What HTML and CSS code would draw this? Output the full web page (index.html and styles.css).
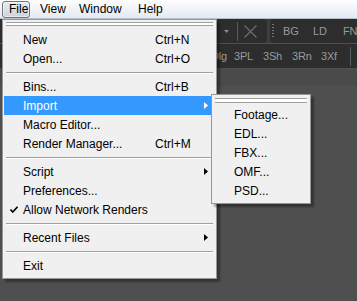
FILE: index.html
```html
<!DOCTYPE html>
<html lang="en">
<head>
    <meta charset="UTF-8">
    <meta name="viewport" content="width=device-width, initial-scale=1.0">
    <title>File menu</title>
    <link rel="stylesheet" href="styles.css">
</head>
<body>

    <div class="app">
        <div class="menubar">
            <span class="mb-item mb-file active">File</span>
            <span class="mb-item mb-view">View</span>
            <span class="mb-item mb-window">Window</span>
            <span class="mb-item mb-help">Help</span>
        </div>

        <div class="tb-row">
            <div class="tb-panel tb-panel-a">
                <svg class="tb-drop" width="5" height="3" viewBox="0 0 5 3"><polygon points="0,0 5,0 2.5,3" fill="#8a8a8a"/></svg>
                <span class="tb-sep"></span>
                <svg class="tb-x" width="13" height="13" viewBox="0 0 13 13"><path d="M0.5 0.5 L12.5 12.5 M12.5 0.5 L0.5 12.5" stroke="#6e6e6e" stroke-width="1.2" fill="none"/></svg>
            </div>
            <div class="tb-panel tb-panel-b">
                <span class="grip"></span>
                <span class="tb-btn">BG</span>
                <span class="tb-btn">LD</span>
                <span class="tb-btn">FN</span>
            </div>
        </div>
        <div class="tb-row">
            <div class="tb-panel tb-panel-c">
                <span class="tb-txt">3Dlg</span>
                <span class="tb-txt">3PL</span>
                <span class="tb-txt">3Sh</span>
                <span class="tb-txt">3Rn</span>
                <span class="tb-txt">3Xf</span>
                <span class="tb-sep tb-sep-c"></span>
            </div>
        </div>
        <div class="workspace"></div>

        <!-- File menu, open -->
        <div class="menu">
            <div class="tearoff"></div>
            <div class="item"><span class="label">New</span><span class="key">Ctrl+N</span></div>
            <div class="item"><span class="label">Open...</span><span class="key">Ctrl+O</span></div>
            <div class="sep"></div>
            <div class="item"><span class="label">Bins...</span><span class="key">Ctrl+B</span></div>
            <div class="item hot"><span class="label">Import</span><svg class="arrow" width="4" height="7" viewBox="0 0 4 7"><polygon points="0,0 4,3.5 0,7" fill="#fff"/></svg></div>
            <div class="item"><span class="label">Macro Editor...</span></div>
            <div class="item"><span class="label">Render Manager...</span><span class="key">Ctrl+M</span></div>
            <div class="sep"></div>
            <div class="item"><span class="label">Script</span><svg class="arrow" width="4" height="7" viewBox="0 0 4 7"><polygon points="0,0 4,3.5 0,7" fill="#000"/></svg></div>
            <div class="item"><span class="label">Preferences...</span></div>
            <div class="item">
                <svg class="check" width="8" height="7" viewBox="0 0 8 7"><path d="M0.5 3.5 L2.8 6 L7.5 0.8" stroke="#000" stroke-width="1.6" fill="none"/></svg>
                <span class="label">Allow Network Renders</span>
            </div>
            <div class="sep"></div>
            <div class="item"><span class="label">Recent Files</span><svg class="arrow" width="4" height="7" viewBox="0 0 4 7"><polygon points="0,0 4,3.5 0,7" fill="#000"/></svg></div>
            <div class="sep"></div>
            <div class="item"><span class="label">Exit</span></div>
        </div>

        <!-- Import submenu -->
        <div class="submenu">
            <div class="tearoff"></div>
            <div class="item"><span class="label">Footage...</span></div>
            <div class="item"><span class="label">EDL...</span></div>
            <div class="item"><span class="label">FBX...</span></div>
            <div class="item"><span class="label">OMF...</span></div>
            <div class="item"><span class="label">PSD...</span></div>
        </div>
    </div>

</body>
</html>
```

FILE: styles.css
```css
body {
    margin: 0;
    font-family: "Liberation Sans", Arial, sans-serif;
    font-size: 12px;
    background: #4f4f4f;
}
.app {
    position: relative;
    width: 357px;
    height: 301px;
    overflow: hidden;
    background: #4f4f4f;
}

/* menu bar */
.menubar {
    display: flex;
    align-items: center;
    height: 18px;
    padding-left: 2px;
    background: linear-gradient(#fdfdfe, #e4e9f2);
    border-bottom: 1px solid #b9c0ca;
    color: #000;
}
.mb-item {
    box-sizing: border-box;
    height: 17px;
    line-height: 15px;
    padding-left: 6px;
    border: 1px solid transparent;
}
.mb-file { width: 28px; }
.mb-view { width: 39px; margin-left: 3px; }
.mb-window { width: 59px; }
.mb-item.active {
    border-color: #6e7784;
    border-radius: 3px;
    background: linear-gradient(#e9ebee, #cfd3d9);
    box-shadow: inset 0 0 0 1px rgba(255, 255, 255, 0.5);
}

/* dark toolbars */
.tb-row {
    display: flex;
    height: 24px;
    margin-bottom: 1px;
    background: #3e3e3e;
}
.tb-panel {
    display: flex;
    align-items: center;
    background: #2d2d2d;
    color: #9a9a9a;
    font-size: 11px;
    letter-spacing: -0.2px;
    white-space: nowrap;
}
.tb-panel-a {
    flex: none;
    width: 267px;
    justify-content: flex-end;
    padding-right: 10px;
    box-sizing: border-box;
    border-radius: 0 4px 4px 0;
}
.tb-drop { margin-right: 8px; }
.tb-sep {
    flex: none;
    width: 1px;
    height: 19px;
    background: #5a5a5a;
    margin-right: 6px;
}
.tb-panel-b {
    flex: 1;
    min-width: 0;
    overflow: hidden;
    margin-left: 3px;
    padding-left: 2px;
    border-radius: 4px 0 0 4px;
}
.grip {
    flex: none;
    width: 2px;
    height: 15px;
    margin-right: 9px;
    background: repeating-linear-gradient(#777 0 1px, transparent 1px 3px);
}
.tb-btn { flex: none; width: 30px; }
.tb-panel-c {
    flex: 1;
    min-width: 0;
    overflow: hidden;
    padding-left: 205px;
}
.tb-txt { flex: none; width: 29px; }
.tb-sep-c { margin-right: 0; }
.workspace {
    height: 17px;
    background: #4a4a4a;
}

/* drop-down menus */
.menu, .submenu {
    position: absolute;
    box-sizing: border-box;
    background: #f0f0f0;
    border: 1px solid #979797;
    box-shadow: 3px 3px 2px rgba(0, 0, 0, 0.35);
    color: #000;
}
.menu {
    left: 2px;
    top: 19px;
    width: 215px;
    padding: 2px 1px 3px;
}
.submenu {
    left: 211px;
    top: 94px;
    width: 100px;
    padding: 3px 1px 3px;
}
.tearoff {
    height: 2px;
    margin: 0 2px 4px;
    background: #fff;
    border-top: 1px solid #a0a0a0;
    border-bottom: 1px solid #a0a0a0;
}
.submenu .tearoff {
    height: 3px;
    margin-bottom: 2px;
}
.item {
    position: relative;
    display: flex;
    align-items: center;
    height: 19px;
    padding-left: 19px;
}
.submenu .item { padding-left: 21px; }
.item.hot {
    background: #3399ff;
    color: #fff;
}
.label { flex: none; }
.key {
    position: absolute;
    left: 151px;
}
.arrow {
    position: absolute;
    left: 200px;
    top: 6px;
}
.check {
    position: absolute;
    left: 6px;
    top: 6px;
}
.sep {
    height: 0;
    margin: 4px 2px 3px;
    border-top: 1px solid #a0a0a0;
    border-bottom: 1px solid #fff;
}
```
